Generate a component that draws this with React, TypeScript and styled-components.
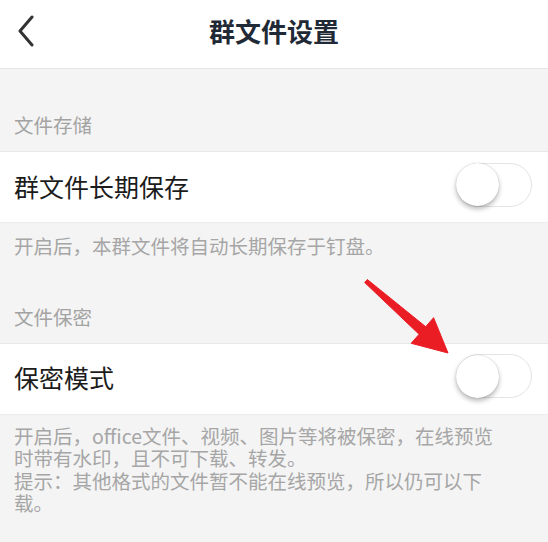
import React from "react";
import styled, { createGlobalStyle } from "styled-components";

const Global = createGlobalStyle`
  html, body { margin: 0; padding: 0; background: #f4f4f4; }
  body { font-family: "Noto Sans CJK SC", "Noto Sans", sans-serif; }
  * { box-sizing: border-box; }
`;

const Page = styled.div`
  position: relative;
  width: 548px;
  height: 542px;
  overflow: hidden;
  background: #f4f4f4;
  display: flex;
  flex-direction: column;
`;

const Header = styled.header`
  height: 69px;
  flex: none;
  background: #fff;
  border-bottom: 1px solid #e6e6e6;
  display: grid;
  grid-template-columns: 60px 1fr 60px;
  align-items: center;
`;

const BackButton = styled.div`
  display: flex;
  align-items: center;
  justify-content: flex-start;
  padding-left: 16px;
  padding-bottom: 6px;
  height: 100%;
`;

const Title = styled.h1`
  margin: 0;
  text-align: center;
  font-size: 26px;
  font-weight: 700;
  color: #1f2a36;
  line-height: 1;
  padding-bottom: 7px;
`;

const Label = styled.div<{ $top: number }>`
  padding: ${(p) => p.$top}px 14px 14px;
  font-size: 19.5px;
  line-height: 24px;
  color: #a3a3a3;
`;

const Row = styled.div`
  height: 72px;
  background: #fff;
  border-top: 1px solid #e8e8e8;
  border-bottom: 1px solid #ececec;
  display: flex;
  align-items: center;
  justify-content: space-between;
  padding: 0 16px 0 14px;
`;

const RowText = styled.span`
  font-size: 25px;
  color: #1c1c1c;
  line-height: 1;
  margin-top: -2px;
`;

const Track = styled.div`
  width: 76px;
  height: 44px;
  border-radius: 22px;
  border: 1.5px solid #e4e4e4;
  background: #fff;
  display: flex;
  align-items: center;
  margin-top: -5px;
`;

const Knob = styled.div`
  width: 43px;
  height: 43px;
  border-radius: 50%;
  background: #fff;
  margin-left: -1px;
  box-shadow: 0 3px 5px rgba(0, 0, 0, 0.28), 0 0 1px rgba(0, 0, 0, 0.25);
`;

const Note = styled.p<{ $top: number }>`
  margin: 0;
  padding: ${(p) => p.$top}px 48px 0 14px;
  font-size: 19.5px;
  line-height: 22.5px;
  color: #a6a6a6;
`;

const Arrow = styled.svg`
  position: absolute;
  left: 0;
  top: 0;
  pointer-events: none;
`;

const Toggle = () => (
  <Track>
    <Knob />
  </Track>
);

export default function App() {
  return (
    <>
      <Global />
      <Page>
        <Header>
          <BackButton>
            <svg width="20" height="32" viewBox="0 0 20 32">
              <polyline
                points="16,2 4,16 16,30"
                fill="none"
                stroke="#333"
                strokeWidth="3"
                strokeLinecap="round"
                strokeLinejoin="round"
              />
            </svg>
          </BackButton>
          <Title>群文件设置</Title>
          <div />
        </Header>

        <Label $top={44}>文件存储</Label>
        <Row>
          <RowText>群文件长期保存</RowText>
          <Toggle />
        </Row>
        <Note $top={12}>开启后，本群文件将自动长期保存于钉盘。</Note>

        <Label $top={47}>文件保密</Label>
        <Row>
          <RowText>保密模式</RowText>
          <Toggle />
        </Row>
        <Note $top={10}>
          开启后，office文件、视频、图片等将被保密，在线预览时带有水印，且不可下载、转发。
          <br />
          提示：其他格式的文件暂不能在线预览，所以仍可以下载。
        </Note>

        <Arrow width="548" height="542" viewBox="0 0 548 542">
          <polygon
            points="367.3,279.5 425.7,326.7 433.6,317.7 448,353 411.2,343.3 419.1,334.3 364.7,282.5"
            fill="#ea1c24"
            stroke="#ea1c24"
            strokeWidth="1"
            strokeLinejoin="round"
          />
        </Arrow>
      </Page>
    </>
  );
}
